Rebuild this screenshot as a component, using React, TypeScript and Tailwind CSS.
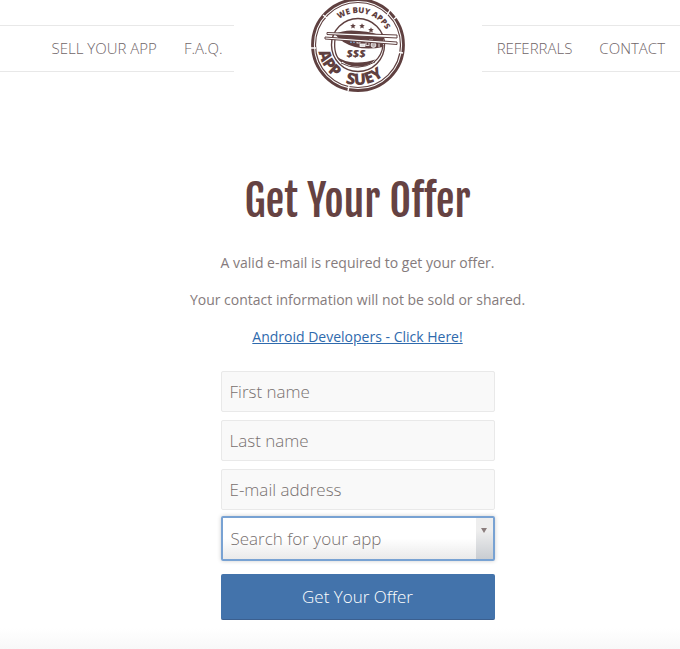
import React from "react";

const BROWN = "#5f4040";

function Star({ x, y }: { x: number; y: number }) {
  return (
    <path
      transform={`translate(${x} ${y})`}
      fill={BROWN}
      d="M0-2.800L.8-.9 2.800-.8 1.300.5 1.800 2.500 0 1.400-1.800 2.500-1.300.5-2.800-.8-.8-.9z"
    />
  );
}

function Logo() {
  return (
    <svg viewBox="0 0 96 96" className="block h-24 w-24" role="img" aria-label="App Suey, we buy apps">
      <defs>
        <path id="arc-top" d="M 16 48 A 32 32 0 0 1 80 48" />
        <path id="arc-bottom" d="M 8 48 A 40 40 0 0 0 88 48" />
      </defs>
      <circle cx="48" cy="48" r="45.500" fill="#fff" stroke={BROWN} strokeWidth="2.800" />
      <circle cx="48" cy="48" r="42.500" fill="none" stroke={BROWN} strokeWidth="1.200" />
      <g stroke="#fff" strokeWidth="1.400">
        <path d="M13 18l4 3M93 56l-6 -1M80 13l-3 5M0 51h6M38 94l1 -5M84 22l5 -4" />
      </g>
      <circle cx="48" cy="48" r="26.500" fill="#fff" stroke={BROWN} strokeWidth="1.400" />
      <path d="M25 42q-2 17 7 23M73 48q-1 11-9 17" fill="none" stroke={BROWN} strokeWidth="1.300" />
      <path d="M27 60q8 5 18 5.500q11 .5 20-3q-4 6-15 7q-14 1-23-9.500z" fill={BROWN} />
      <path d="M31 66q16 9 34-1" fill="none" stroke={BROWN} strokeWidth="1" />
      <path d="M25 37q10-5 24-3q16 1 24 6v10q-15 3-28 0q-14-4-20-13z" fill={BROWN} />
      <g stroke="#fff" strokeWidth="0.800" fill="none">
        <path d="M41 43v3M44 43v3" stroke="#77a3d2" strokeWidth="1.600" />
        <rect x="47" y="43" width="3" height="3" />
        <rect x="50" y="47" width="5" height="2.500" fill="#ddd" />
        <rect x="56" y="45" width="3" height="3.500" />
        <circle cx="63.500" cy="48" r="2.400" fill="#bbb0b0" />
        <path d="M69 46v4M59 43h4" />
      </g>
      <g fill="#fff" stroke={BROWN} strokeWidth="1">
        <path d="M17 35.500l70 2.500v3l-70-3.500z" />
        <path d="M15 40l72 5v2.500l-72-5.500z" />
      </g>
      <g fill={BROWN} fontFamily='"Open Sans", sans-serif' fontWeight="800">
        <text fontSize="8" textAnchor="middle">
          <textPath href="#arc-top" startOffset="57%">WE BUY APPS</textPath>
        </text>
        <text fontSize="16" textAnchor="middle">
          <textPath href="#arc-bottom" startOffset="18%">APP</textPath>
        </text>
        <text fontSize="16" textAnchor="middle">
          <textPath href="#arc-bottom" startOffset="56%">SUEY</textPath>
        </text>
        <text x="46" y="61" fontSize="11" fontStyle="italic" textAnchor="middle">$$$</text>
      </g>
      <Star x={43} y={29} />
      <Star x={52} y={29} />
      <Star x={61} y={33} />
    </svg>
  );
}

function NavLink({ children }: { children: React.ReactNode }) {
  return (
    <a href="#" className="whitespace-nowrap text-[#6f6568]">
      {children}
    </a>
  );
}

function Field({ label, type = "text" }: { label: string; type?: string }) {
  return (
    <input
      type={type}
      aria-label={label}
      placeholder={label}
      className="block h-[41px] w-full rounded-xs border border-[#e9e9e9] bg-[#f9f9f9] px-2 text-[17px] font-light text-[#6f6568] outline-none placeholder:text-[#77706f]"
    />
  );
}

export default function App() {
  return (
    <div className="flex min-h-screen flex-col bg-white font-['Open_Sans',sans-serif]">
      <header className="flex items-start">
        <nav aria-label="Main" className="mt-[25px] flex h-[47px] flex-1 items-center justify-end gap-[27px] border-y border-[#e8e8e8] pr-[11px] text-[15px] font-light">
          <NavLink>SELL YOUR APP</NavLink>
          <NavLink>F.A.Q.</NavLink>
        </nav>
        <a href="#" className="-mt-[3px] flex w-[248px] shrink-0 justify-center">
          <Logo />
        </a>
        <nav aria-label="More" className="mt-[25px] flex h-[47px] items-center gap-[27px] border-y border-[#e8e8e8] px-[15px] text-[15px] font-light">
          <NavLink>REFERRALS</NavLink>
          <NavLink>CONTACT</NavLink>
        </nav>
      </header>

      <main className="flex flex-col items-center pt-[76px] pl-[35px] text-center">
        <h1 className="font-['Fjalla_One','Liberation_Sans_Narrow',sans-serif] text-[42px] leading-[64px] font-normal text-[#654242]">
          Get Your Offer
        </h1>
        <div className="mt-[18px] flex flex-col gap-[13px] text-sm leading-6 text-[#857b7c]">
          <p>A valid e-mail is required to get your offer.</p>
          <p>Your contact information will not be sold or shared.</p>
          <p>
            <a href="#" className="text-[#2f6aad] underline">Android Developers - Click Here!</a>
          </p>
        </div>

        <form className="mt-[22px] w-[274px] text-left" onSubmit={(e) => e.preventDefault()}>
          <div className="flex flex-col gap-2">
            <Field label="First name" />
            <Field label="Last name" />
            <Field label="E-mail address" type="email" />
          </div>
          <div className="relative mt-[6px]">
            <select
              aria-label="Search for your app"
              defaultValue=""
              className="block h-[45px] w-full appearance-none rounded-xs border-2 border-[#78a2d3] bg-linear-to-b from-white from-50% to-[#eaeaea] px-2 text-[17px] font-light text-[#77706f] shadow-[0_0_4px_rgba(0,0,0,0.2)] outline-none"
            >
              <option value="">Search for your app</option>
            </select>
            <span className="pointer-events-none absolute inset-y-[2px] right-[2px] flex w-[17px] justify-center bg-linear-to-b from-[#eeeeee] from-30% to-[#c9cdd2] pt-[10px]">
              <svg viewBox="0 0 6 5" className="h-[5px] w-[6px]" aria-hidden="true">
                <path d="M0 0h6L3 5z" fill="#8a7d7d" />
              </svg>
            </span>
          </div>
          <button
            type="submit"
            className="mt-[13px] block h-[46px] w-full rounded-xs border-b border-[#3b5f8f] bg-[#4373ab] text-[17px] font-light text-white"
          >
            Get Your Offer
          </button>
        </form>
      </main>
      <div className="mt-2 min-h-5 flex-1 bg-linear-to-b from-white to-[#f8f8f8]" />
    </div>
  );
}
